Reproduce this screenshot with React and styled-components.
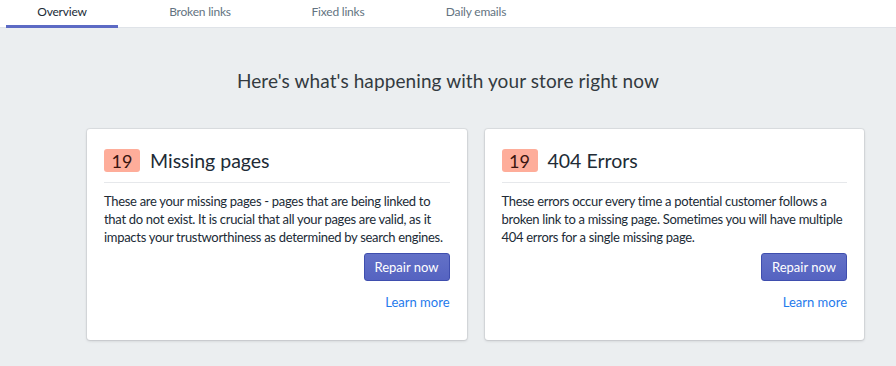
import React from "react";
import styled, { createGlobalStyle } from "styled-components";

const GlobalStyle = createGlobalStyle`
  body {
    margin: 0;
    background: #ebeef0;
    font-family: Lato, "Noto Sans", sans-serif;
    color: #212b36;
  }
`;

const tabs = ["Overview", "Broken links", "Fixed links", "Daily emails"];

const cards = [
  {
    count: 19,
    title: "Missing pages",
    text: "These are your missing pages - pages that are being linked to that do not exist. It is crucial that all your pages are valid, as it impacts your trustworthiness as determined by search engines.",
  },
  {
    count: 19,
    title: "404 Errors",
    text: "These errors occur every time a potential customer follows a broken link to a missing page. Sometimes you will have multiple 404 errors for a single missing page.",
  },
];

function App() {
  return (
    <Page>
      <GlobalStyle />
      <TabBar>
        {tabs.map((t, i) => (
          <Tab key={t} active={i === 0}>
            {t}
          </Tab>
        ))}
      </TabBar>
      <Heading>Here's what's happening with your store right now</Heading>
      <Cards>
        {cards.map((c) => (
          <Card key={c.title}>
            <CardHeader>
              <Badge>{c.count}</Badge>
              <CardTitle>{c.title}</CardTitle>
            </CardHeader>
            <CardText>{c.text}</CardText>
            <Actions>
              <RepairButton>Repair now</RepairButton>
              <LearnMore href="#">Learn more</LearnMore>
            </Actions>
          </Card>
        ))}
      </Cards>
    </Page>
  );
}

export default App;

const Page = styled.div`
  min-height: 366px;
  background: #ebeef0;
`;

const TabBar = styled.div`
  display: flex;
  height: 28px;
  padding-left: 6px;
  background: #fff;
  border-bottom: 1px solid #dfe3e8;
  box-sizing: border-box;
`;

const Tab = styled.div`
  width: 112px;
  margin-right: 26px;
  display: flex;
  align-items: flex-start;
  justify-content: center;
  padding-top: 4px;
  box-sizing: border-box;
  font-size: 12px;
  letter-spacing: -0.2px;
  color: ${(p) => (p.active ? "#212b36" : "#637381")};
  border-bottom: 3px solid ${(p) => (p.active ? "#5c6ac4" : "transparent")};
  margin-bottom: -1px;
`;

const Heading = styled.h1`
  margin: 40px 0 0;
  text-align: center;
  font-size: 19px;
  font-weight: 400;
  line-height: 26px;
  letter-spacing: 0.1px;
  color: #333a40;
`;

const Cards = styled.div`
  display: flex;
  gap: 18px;
  padding: 0 32px 0 87px;
  margin-top: 35px;
`;

const Card = styled.div`
  flex: 1;
  height: 211px;
  box-sizing: border-box;
  background: #fff;
  border-radius: 3px;
  box-shadow: 0 0 0 1px rgba(63, 63, 68, 0.07), 0 1px 3px rgba(63, 63, 68, 0.2);
  padding: 20px 17px 0 17px;
`;

const CardHeader = styled.div`
  display: flex;
  align-items: center;
  gap: 10px;
  padding-bottom: 10px;
  border-bottom: 1px solid #e6e8eb;
`;

const Badge = styled.span`
  width: 36px;
  height: 23px;
  display: flex;
  align-items: center;
  justify-content: center;
  background: #fead9a;
  border-radius: 3px;
  font-size: 18px;
  color: #3a1510;
`;

const CardTitle = styled.h2`
  margin: 0;
  font-size: 19.5px;
  font-weight: 400;
  color: #212b36;
`;

const CardText = styled.p`
  margin: 9px 0 0;
  font-size: 13px;
  line-height: 18px;
  letter-spacing: -0.3px;
  color: #212b36;
`;

const Actions = styled.div`
  display: flex;
  flex-direction: column;
  align-items: flex-end;
  gap: 13px;
  margin-top: 7px;
`;

const RepairButton = styled.button`
  width: 86px;
  height: 28px;
  background: linear-gradient(#6371c7, #5563c1);
  border: 1px solid #3f4eae;
  border-radius: 3px;
  color: #fff;
  font-family: inherit;
  font-size: 13px;
  cursor: pointer;
`;

const LearnMore = styled.a`
  font-size: 13px;
  color: #1f7aec;
  text-decoration: none;
`;
